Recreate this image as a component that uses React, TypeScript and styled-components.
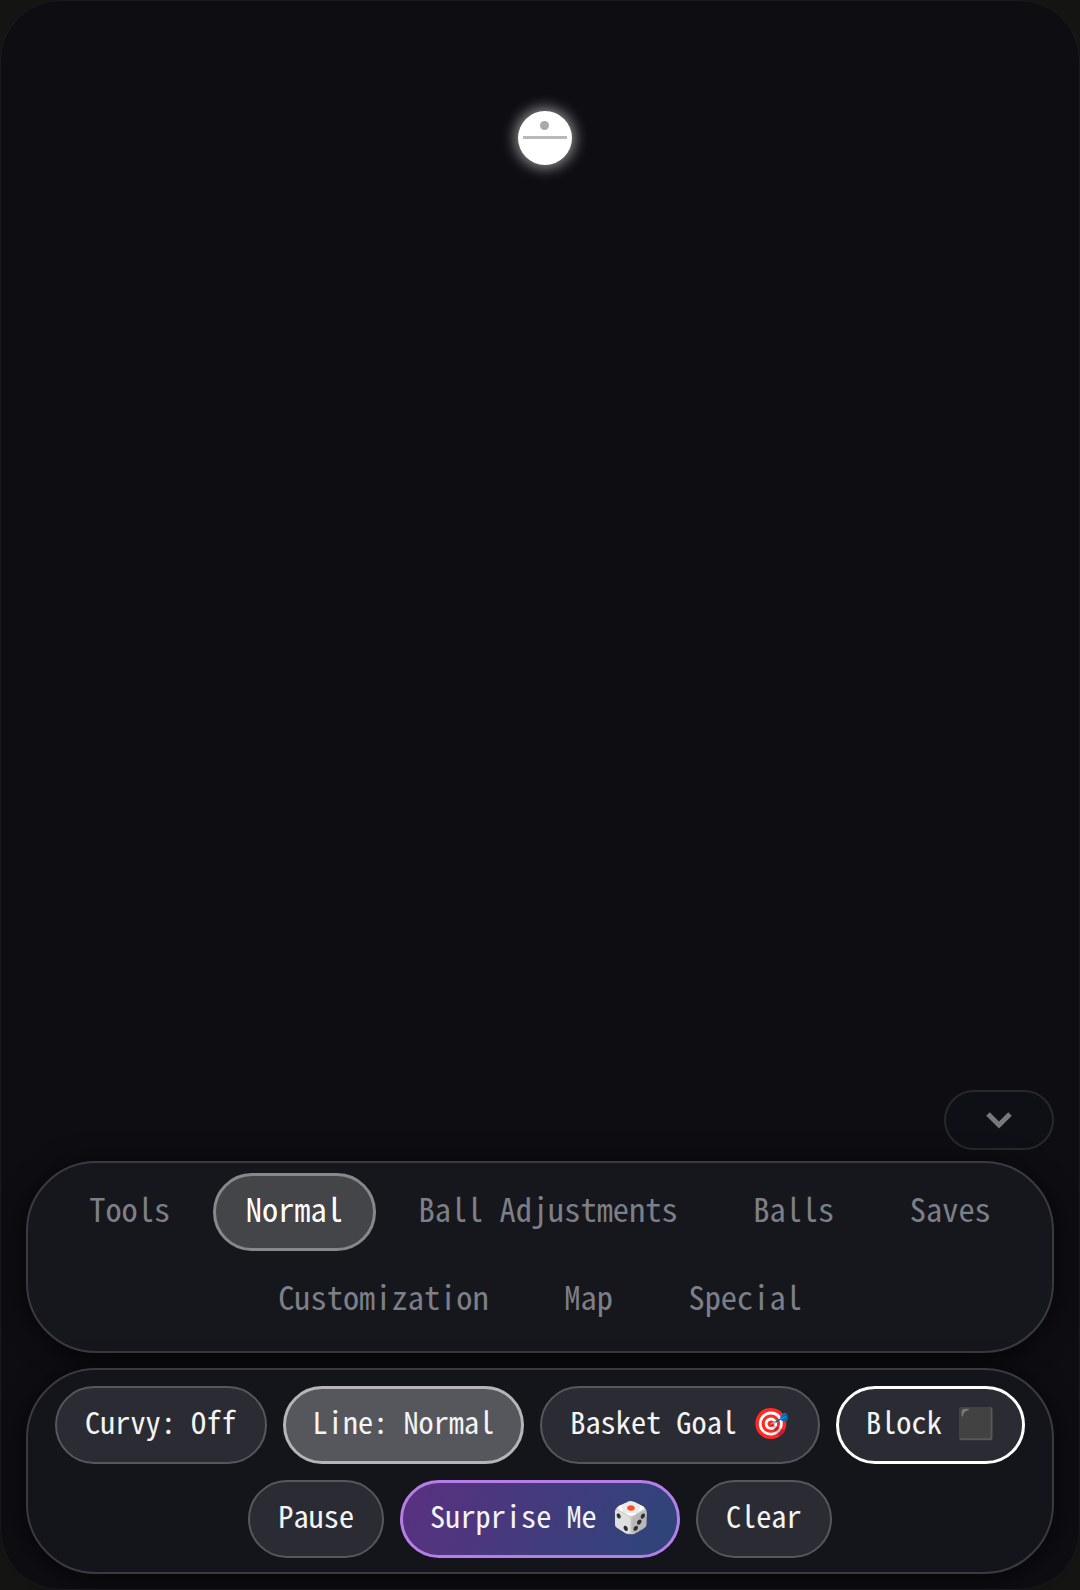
import styled, { createGlobalStyle } from "styled-components";

const GlobalStyle = createGlobalStyle`
  html, body {
    margin: 0;
    padding: 0;
    background: #141413;
  }
  * {
    box-sizing: border-box;
  }
`;

const Frame = styled.div`
  width: 1080px;
  height: 1590px;
  display: flex;
  flex-direction: column;
  padding: 0 25px 15px;
  border-radius: 60px;
  border: 1px solid #1a1b1f;
  background: #0d0d12;
  font-family: "Noto Sans Mono CJK SC", "Noto Sans Mono CJK JP", "Noto Sans Mono", "Liberation Mono", monospace;
  position: relative;
`;

const Ball = styled.div`
  position: absolute;
  left: 517px;
  top: 110px;
  width: 54px;
  height: 54px;
  border-radius: 50%;
  background: #fff;
  box-shadow: 0 0 14px 3px rgba(255, 255, 255, 0.55);
`;

const BallDot = styled.span`
  position: absolute;
  left: 22px;
  top: 10px;
  width: 9px;
  height: 9px;
  border-radius: 50%;
  background: #a9a9a9;
`;

const BallLine = styled.span`
  position: absolute;
  left: 5px;
  top: 25px;
  width: 44px;
  height: 3px;
  background: #b9b9b9;
`;

const ToggleRow = styled.div`
  flex: 1;
  display: flex;
  justify-content: flex-end;
  align-items: flex-end;
  padding-bottom: 11px;
`;

const Toggle = styled.div`
  width: 110px;
  height: 60px;
  border-radius: 30px;
  border: 2px solid #26282c;
  background: #0f1015;
  display: flex;
  align-items: center;
  justify-content: center;
  color: #77787b;
`;

const Panel = styled.div<{ $tone: string }>`
  display: flex;
  flex-wrap: wrap;
  justify-content: center;
  align-content: flex-start;
  border-radius: 70px;
  border: 2px solid #3a3b3f;
  background: ${(p) => p.$tone};
  box-shadow: 0 4px 28px rgba(0, 0, 0, 0.55);
`;

const TabPanel = styled(Panel)`
  height: 192px;
  gap: 10px 9.6px;
  padding: 10px 0 0;
  margin-bottom: 15px;
`;

const ActionPanel = styled(Panel)`
  height: 206px;
  gap: 16px;
  padding: 16px 0 0;
`;

const Tab = styled.div<{ $active?: boolean }>`
  height: 78px;
  padding: 0 ${(p) => (p.$active ? "30px" : "31px")};
  border-radius: 39px;
  border: ${(p) => (p.$active ? "3px solid #87888a" : "2px solid transparent")};
  background: ${(p) => (p.$active ? "#434549" : "transparent")};
  color: ${(p) => (p.$active ? "#ffffff" : "#7d7f88")};
  font-size: 32.4px;
  line-height: ${(p) => (p.$active ? "64px" : "66px")};
  white-space: pre;
`;

const Action = styled.div<{ $kind?: "line" | "block" | "surprise" }>`
  height: 78px;
  padding: 0 ${(p) => (p.$kind ? "27px" : "28px")};
  border-radius: 39px;
  border: ${(p) => (p.$kind ? "3px" : "2px")} solid
    ${(p) =>
      p.$kind === "line"
        ? "#b5b5b7"
        : p.$kind === "block"
        ? "#ffffff"
        : p.$kind === "surprise"
        ? "#b57ee8"
        : "#56575a"};
  background: ${(p) =>
    p.$kind === "line"
      ? "#56575c"
      : p.$kind === "surprise"
      ? "linear-gradient(115deg, #5a3080, #2c4679)"
      : "#2b2c33"};
  color: #f4f4f4;
  font-size: 30.3px;
  line-height: ${(p) => (p.$kind ? "64px" : "66px")};
  white-space: pre;
`;

const tabs = ["Tools", "Normal", "Ball Adjustments", "Balls", "Saves", "Customization", "Map", "Special"];

export default function App() {
  return (
    <>
      <GlobalStyle />
      <Frame>
        <Ball>
          <BallDot />
          <BallLine />
        </Ball>
        <ToggleRow>
          <Toggle>
            <svg width="28" height="18" viewBox="0 0 28 18" fill="none" stroke="currentColor" strokeWidth="5">
              <path d="M3 3 L14 14 L25 3" />
            </svg>
          </Toggle>
        </ToggleRow>
        <TabPanel $tone="#15171c">
          {tabs.map((t) => (
            <Tab key={t} $active={t === "Normal"}>{t}</Tab>
          ))}
        </TabPanel>
        <ActionPanel $tone="#14151a">
          <Action>Curvy: Off</Action>
          <Action $kind="line">Line: Normal</Action>
          <Action>Basket Goal 🎯</Action>
          <Action $kind="block">Block ⬛</Action>
          <Action>Pause</Action>
          <Action $kind="surprise">Surprise Me 🎲</Action>
          <Action>Clear</Action>
        </ActionPanel>
      </Frame>
    </>
  );
}
